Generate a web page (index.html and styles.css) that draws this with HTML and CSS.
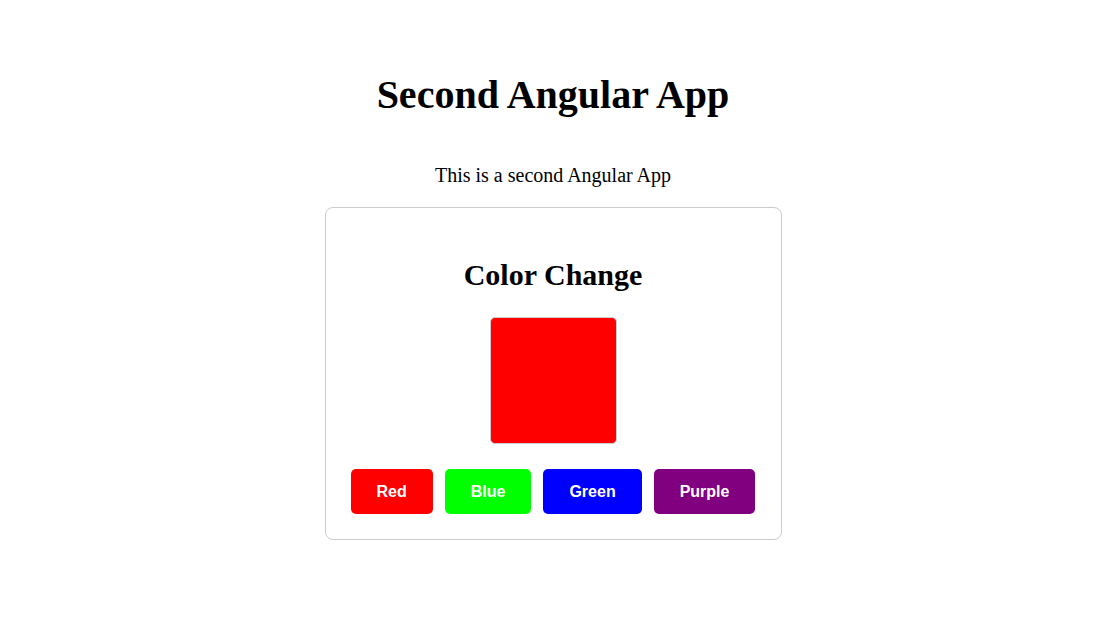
FILE: index.html
```html
<!DOCTYPE html>
<html>
<head>
<meta charset="utf-8">
<title>Second Angular App</title>
<link rel="stylesheet" href="styles.css">
</head>
<body>
<div class="app">
  <h1 class="title">Second Angular App</h1>
  <p class="lead">This is a second Angular App</p>
  <div class="card">
    <h2 class="card-title">Color Change</h2>
    <div class="swatch"></div>
    <div class="buttons">
      <button class="btn btn-red">Red</button>
      <button class="btn btn-green">Blue</button>
      <button class="btn btn-blue">Green</button>
      <button class="btn btn-purple">Purple</button>
    </div>
  </div>
</div>
</body>
</html>
```

FILE: styles.css
```css
html, body {
  margin: 0;
  padding: 0;
  background: #fff;
}
body {
  font-family: "Liberation Serif", "Times New Roman", serif;
  color: #000;
}
.app {
  padding: 0 6px 0 10px;
  text-align: center;
}
.title {
  font-size: 40px;
  font-weight: bold;
  margin: 0;
  padding-top: 72px;
  line-height: 46px;
}
.lead {
  font-size: 20px;
  margin: 0;
  padding-top: 46px;
  line-height: 23px;
}
.card {
  width: 457px;
  box-sizing: border-box;
  margin: 20px auto 0;
  border: 1px solid #ccc;
  border-radius: 8px;
  padding: 50px 0 25px;
}
.card-title {
  font-size: 30px;
  font-weight: bold;
  margin: 0;
  line-height: 34px;
}
.swatch {
  width: 125px;
  height: 125px;
  margin: 25px auto 0;
  background: #f00;
  border: 1px solid #ccc;
  border-radius: 5px;
}
.buttons {
  margin-top: 25px;
  display: flex;
  justify-content: center;
  gap: 12px;
}
.btn {
  font-family: "Liberation Sans", Arial, sans-serif;
  font-size: 16px;
  font-weight: bold;
  color: #fff;
  border: none;
  border-radius: 5px;
  padding: 0 26px;
  height: 45px;
  cursor: pointer;
}
.btn-red { background: #f00; }
.btn-green { background: #0f0; }
.btn-blue { background: #00f; }
.btn-purple { background: #800080; }
```
